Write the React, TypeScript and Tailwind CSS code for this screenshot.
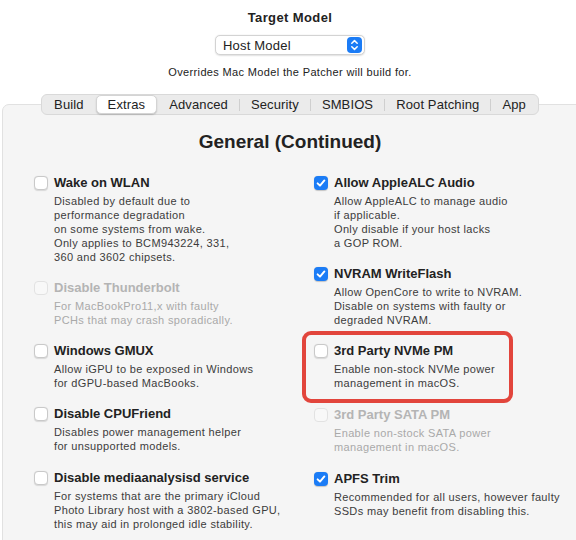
import type { ReactNode } from "react";

type Option = {
  title: string;
  lines: string[];
  checked?: boolean;
  disabled?: boolean;
  highlight?: boolean;
  extraTop?: boolean;
};

const tabs = ["Build", "Extras", "Advanced", "Security", "SMBIOS", "Root Patching", "App"];
const selectedTab = 1;

const leftOptions: Option[] = [
  {
    title: "Wake on WLAN",
    lines: [
      "Disabled by default due to",
      "performance degradation",
      "on some systems from wake.",
      "Only applies to BCM943224, 331,",
      "360 and 3602 chipsets.",
    ],
  },
  {
    title: "Disable Thunderbolt",
    lines: ["For MacBookPro11,x with faulty", "PCHs that may crash sporadically."],
    disabled: true,
  },
  {
    title: "Windows GMUX",
    lines: ["Allow iGPU to be exposed in Windows", "for dGPU-based MacBooks."],
  },
  {
    title: "Disable CPUFriend",
    lines: ["Disables power management helper", "for unsupported models."],
  },
  {
    title: "Disable mediaanalysisd service",
    lines: [
      "For systems that are the primary iCloud",
      "Photo Library host with a 3802-based GPU,",
      "this may aid in prolonged idle stability.",
    ],
    extraTop: true,
  },
];

const rightOptions: Option[] = [
  {
    title: "Allow AppleALC Audio",
    lines: [
      "Allow AppleALC to manage audio",
      "if applicable.",
      "Only disable if your host lacks",
      "a GOP ROM.",
    ],
    checked: true,
  },
  {
    title: "NVRAM WriteFlash",
    lines: ["Allow OpenCore to write to NVRAM.", "Disable on systems with faulty or", "degraded NVRAM."],
    checked: true,
  },
  {
    title: "3rd Party NVMe PM",
    lines: ["Enable non-stock NVMe power", "management in macOS."],
    highlight: true,
  },
  {
    title: "3rd Party SATA PM",
    lines: ["Enable non-stock SATA power", "management in macOS."],
    disabled: true,
    extraTop: true,
  },
  {
    title: "APFS Trim",
    lines: ["Recommended for all users, however faulty", "SSDs may benefit from disabling this."],
    checked: true,
    extraTop: true,
  },
];

function Checkbox({ checked, disabled }: { checked?: boolean; disabled?: boolean }) {
  if (checked) {
    return (
      <div className="mt-[2px] flex h-[14px] w-[14px] shrink-0 items-center justify-center rounded-[4px] bg-[#1b7cf6] shadow-[0_0.5px_1px_rgba(0,0,0,0.2)]">
        <svg width="14" height="14" viewBox="0 0 14 14" fill="none">
          <path d="M3.6 7.3 L6 9.7 L10.4 4.4" stroke="white" strokeWidth="1.9" strokeLinecap="round" strokeLinejoin="round" />
        </svg>
      </div>
    );
  }
  return (
    <div
      className={
        disabled
          ? "mt-[2px] h-[14px] w-[14px] shrink-0 rounded-[4px] border border-[#e2e2e2] bg-[#f8f8f8]"
          : "mt-[2px] h-[14px] w-[14px] shrink-0 rounded-[4px] border border-[#c9c9c9] bg-white shadow-[0_0.5px_1px_rgba(0,0,0,0.12)]"
      }
    />
  );
}

function Item({ option }: { option: Option }) {
  const body: ReactNode = (
    <div className="flex gap-[6px]">
      <Checkbox checked={option.checked} disabled={option.disabled} />
      <div className="flex flex-col">
        <div
          className={`whitespace-nowrap text-[13px] font-bold leading-[18px] ${
            option.disabled ? "text-[#b4b4b4]" : "text-[#222222]"
          }`}
        >
          {option.title}
        </div>
        <div
          className={`mt-[2px] flex flex-col text-[11px] leading-[14px] tracking-[0.35px] ${
            option.disabled ? "text-[#a9a9a9]" : "text-[#3c3c3c]"
          }`}
        >
          {option.lines.map((line) => (
            <span key={line} className="whitespace-nowrap">
              {line}
            </span>
          ))}
        </div>
      </div>
    </div>
  );

  if (!option.highlight) return <div className={option.extraTop ? "mt-[1px]" : ""}>{body}</div>;

  return (
    <div className="relative">
      {body}
      <div className="pointer-events-none absolute -left-[12px] -top-[11px] h-[72px] w-[211px] rounded-[9px] border-[4px] border-[#e2453c]" />
    </div>
  );
}

function TabBar() {
  return (
    <div className="relative z-10 flex h-[21px] items-stretch rounded-[6px] border border-[#d9d9d9] bg-[#ebebeb] px-[1px]">
      {tabs.map((tab, i) => {
        const selected = i === selectedTab;
        const hideSep = i === selectedTab || i - 1 === selectedTab;
        return (
          <div key={tab} className="flex items-center">
            {i > 0 && <div className={`h-[12px] w-px ${hideSep ? "bg-transparent" : "bg-[#cfcfcf]"}`} />}
            <div
              className={`flex h-full items-center px-[11px] text-[13px] leading-none tracking-[0.12px] text-[#222222] ${
                selected ? "rounded-[5px] border-[0.5px] border-[#d4d4d4] bg-white shadow-[0_1px_1.5px_rgba(0,0,0,0.18)]" : ""
              }`}
            >
              {tab}
            </div>
          </div>
        );
      })}
    </div>
  );
}

export default function App() {
  return (
    <div className="h-[540px] w-[576px] overflow-hidden bg-white font-['Liberation_Sans',Arial,sans-serif]">
      <div className="flex w-[580px] flex-col items-center">
        <div className="pt-[10px] text-[13px] font-bold leading-[16px] tracking-[0.4px] text-[#222222]">Target Model</div>

        <div className="mt-[9px] flex h-[20px] w-[150px] items-center justify-between rounded-[5px] border border-[#d3d3d3] bg-white pl-[7px] pr-[2px] shadow-[0_0.5px_1.5px_rgba(0,0,0,0.12)]">
          <span className="text-[13px] leading-none tracking-[0.2px] text-[#222222]">Host Model</span>
          <div className="flex h-[16px] w-[15px] items-center justify-center rounded-[4px] bg-[#1b7cf6]">
            <svg width="15" height="16" viewBox="0 0 15 16" fill="none">
              <path d="M4.8 6.2 L7.5 3.6 L10.2 6.2" stroke="white" strokeWidth="1.5" strokeLinecap="round" strokeLinejoin="round" />
              <path d="M4.8 9.8 L7.5 12.4 L10.2 9.8" stroke="white" strokeWidth="1.5" strokeLinecap="round" strokeLinejoin="round" />
            </svg>
          </div>
        </div>

        <div className="mt-[10px] text-[11px] leading-[14px] tracking-[0.35px] text-[#222222]">
          Overrides Mac Model the Patcher will build for.
        </div>

        <div className="mt-[15px] flex w-[576px] flex-col items-center">
          <TabBar />
          <div className="-mt-[11px] h-[460px] w-full rounded-tl-[7px] border border-[#e1e1e1] bg-[#f5f5f5] pt-[26px]">
            <div className="text-center text-[19px] font-bold leading-[22px] text-[#222222]">General (Continued)</div>
            <div className="mt-[21px] flex pl-[31px]">
              <div className="flex w-[280px] flex-col gap-[15px]">
                {leftOptions.map((o) => (
                  <Item key={o.title} option={o} />
                ))}
              </div>
              <div className="flex w-[262px] flex-col gap-[15px]">
                {rightOptions.map((o) => (
                  <Item key={o.title} option={o} />
                ))}
              </div>
            </div>
          </div>
        </div>
      </div>
    </div>
  );
}
